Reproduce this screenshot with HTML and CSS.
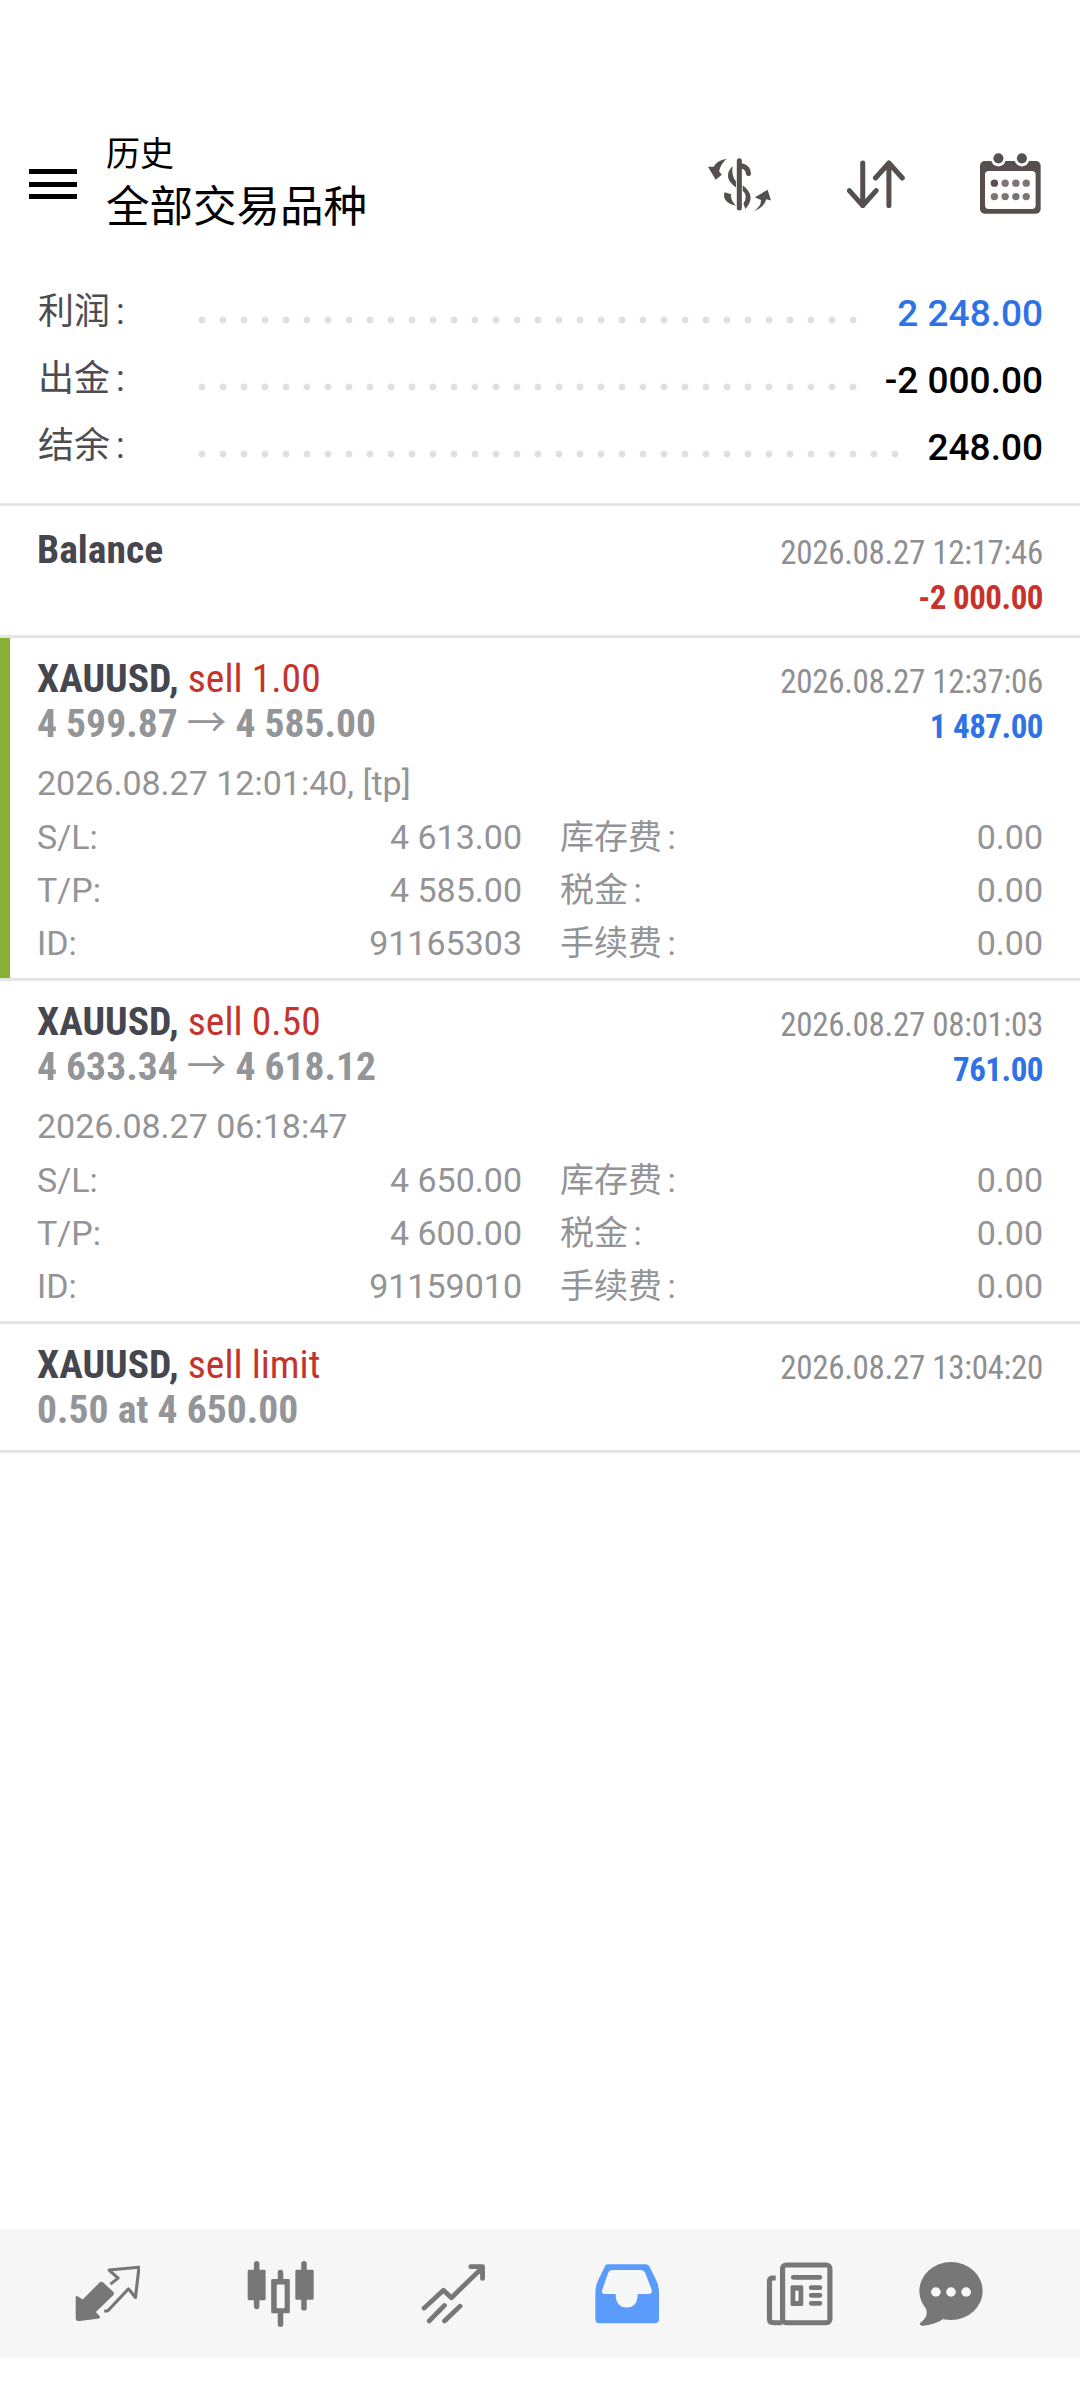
FILE: index.html
```html
<!DOCTYPE html>
<html lang="zh-CN">
<head>
    <meta charset="UTF-8">
    <title>历史</title>
    <link rel="stylesheet" href="styles.css">
</head>
<body>
    <header class="topbar">
        <div class="burger"><span></span><span></span><span></span></div>
        <div class="titles">
            <div class="title-small">历史</div>
            <div class="title-big">全部交易品种</div>
        </div>
        <div class="top-icons">
            <svg class="ic-money" viewBox="85 82 187 158" preserveAspectRatio="none">
                <path d="M178 90V231" fill="none" stroke="#55504d" stroke-width="15" stroke-linecap="round"/>
                <path d="M205 128Q203 110 186 106" fill="none" stroke="#55504d" stroke-width="15" stroke-linecap="round"/>
                <path d="M158 106Q126 140 168 170L168 152Q154 135 158 106Z" fill="#55504d"/>
                <path d="M188 163Q230 195 196 234L190 218Q206 195 188 180Z" fill="#55504d"/>
                <path d="M134 184Q126 215 168 224Q150 205 154 190Z" fill="#55504d"/>
                <path d="M140 84Q110 90 102 108L85 108L108 147L126 132L118 122Q120 104 140 84Z" fill="#55504d"/>
                <path d="M220 240Q244 226 242 207L224 199L262 177L272 209L258 205Q252 230 220 240Z" fill="#55504d"/>
            </svg>
            <svg class="ic-sort" viewBox="500 88 173 144" preserveAspectRatio="none">
                <path d="M547 97V225M507 180L547 225L587 180M625 225V97M585 142L625 97L665 142" fill="none" stroke="#55504d" stroke-width="15" stroke-linecap="round" stroke-linejoin="round"/>
            </svg>
            <svg class="ic-cal" viewBox="900 66 182 182" preserveAspectRatio="none">
                <rect x="900" y="90" width="181" height="157" rx="14" fill="#55504d"/>
                <rect x="915" y="120" width="151" height="113" rx="11" fill="#fff"/>
                <circle cx="955" cy="84" r="22" fill="#fff"/>
                <circle cx="1025" cy="84" r="22" fill="#fff"/>
                <circle cx="955" cy="82" r="15" fill="#55504d"/>
                <circle cx="1025" cy="82" r="15" fill="#55504d"/>
                <circle cx="943" cy="156" r="11" fill="#55504d"/>
                <circle cx="975" cy="156" r="11" fill="#7b7673"/>
                <circle cx="1007" cy="156" r="11" fill="#7b7673"/>
                <circle cx="1038" cy="156" r="11" fill="#7b7673"/>
                <circle cx="943" cy="196" r="11" fill="#7b7673"/>
                <circle cx="975" cy="196" r="11" fill="#7b7673"/>
                <circle cx="1007" cy="196" r="11" fill="#7b7673"/>
                <circle cx="1038" cy="196" r="11" fill="#7b7673"/>
            </svg>
        </div>
    </header>

    <section class="summary">
        <div class="sum-row">
            <span class="sum-label">利润 :</span>
            <span class="dots dots-32"></span>
            <span class="sum-value blue">2 248.00</span>
        </div>
        <div class="sum-row">
            <span class="sum-label">出金 :</span>
            <span class="dots dots-32"></span>
            <span class="sum-value">-2 000.00</span>
        </div>
        <div class="sum-row">
            <span class="sum-label">结余 :</span>
            <span class="dots dots-34"></span>
            <span class="sum-value">248.00</span>
        </div>
    </section>

    <section class="item item-balance">
        <div class="item-head">
            <div class="names">
                <div class="name"><b>Balance</b></div>
            </div>
            <div class="times">
                <div class="time">2026.08.27 12:17:46</div>
                <div class="amount red">-2 000.00</div>
            </div>
        </div>
    </section>

    <section class="item item-closed">
        <div class="item-head">
            <div class="names">
                <div class="name"><b>XAUUSD,</b> <em>sell 1.00</em></div>
                <div class="price">4 599.87 <i>→</i> 4 585.00</div>
            </div>
            <div class="times">
                <div class="time">2026.08.27 12:37:06</div>
                <div class="amount blue">1 487.00</div>
            </div>
        </div>
        <div class="opened">2026.08.27 12:01:40, [tp]</div>
        <div class="details">
            <span>S/L:</span><span class="num">4 613.00</span><span class="zh">库存费 :</span><span class="num">0.00</span>
            <span>T/P:</span><span class="num">4 585.00</span><span class="zh">税金 :</span><span class="num">0.00</span>
            <span>ID:</span><span class="num">91165303</span><span class="zh">手续费 :</span><span class="num">0.00</span>
        </div>
    </section>

    <section class="item">
        <div class="item-head">
            <div class="names">
                <div class="name"><b>XAUUSD,</b> <em>sell 0.50</em></div>
                <div class="price">4 633.34 <i>→</i> 4 618.12</div>
            </div>
            <div class="times">
                <div class="time">2026.08.27 08:01:03</div>
                <div class="amount blue">761.00</div>
            </div>
        </div>
        <div class="opened">2026.08.27 06:18:47</div>
        <div class="details">
            <span>S/L:</span><span class="num">4 650.00</span><span class="zh">库存费 :</span><span class="num">0.00</span>
            <span>T/P:</span><span class="num">4 600.00</span><span class="zh">税金 :</span><span class="num">0.00</span>
            <span>ID:</span><span class="num">91159010</span><span class="zh">手续费 :</span><span class="num">0.00</span>
        </div>
    </section>

    <section class="item item-pending">
        <div class="item-head">
            <div class="names">
                <div class="name"><b>XAUUSD,</b> <em>sell limit</em></div>
                <div class="price">0.50 at 4 650.00</div>
            </div>
            <div class="times">
                <div class="time">2026.08.27 13:04:20</div>
            </div>
        </div>
    </section>

    <div class="blank"></div>

    <nav class="bottom-nav">
        <div class="nav-slot">
            <svg class="nav-trade" viewBox="218 165 187 170" preserveAspectRatio="none">
                <path d="M220 262Q220 254 228 260L240 268L288 218Q294 212 300 218L328 245Q332 250 328 255L278 305L288 316Q294 324 284 325L230 332Q220 333 220 322Z" fill="#777"/>
                <path d="M302 302H312L372 236L392 262L402 172L316 180L342 204L320 222" fill="none" stroke="#777" stroke-width="9" stroke-linejoin="round"/>
            </svg>
        </div>
        <div class="nav-slot">
            <svg class="nav-chart" viewBox="716 150 194 197" preserveAspectRatio="none">
                <path d="M744 158V286M813 184V339M881 158V290" fill="none" stroke="#777" stroke-width="16" stroke-linecap="round"/>
                <rect x="718" y="176" width="52" height="91" rx="4" fill="#777"/>
                <rect x="856" y="176" width="53" height="90" rx="4" fill="#777"/>
                <rect x="786" y="204" width="54" height="102" rx="4" fill="#777"/>
                <rect x="802" y="220" width="23" height="71" rx="3" fill="#f6f6f6"/>
            </svg>
        </div>
        <div class="nav-slot">
            <svg class="nav-signal" viewBox="1222 157 188 178" preserveAspectRatio="none">
                <path d="M1231 288L1287 235L1310 257L1392 175M1366 165H1400V200M1246 326L1290 280M1290 326L1335 282" fill="none" stroke="#777" stroke-width="14" stroke-linecap="round" stroke-linejoin="round"/>
            </svg>
        </div>
        <div class="nav-slot">
            <svg class="nav-history" viewBox="160 157 186 178" preserveAspectRatio="none">
                <path d="M198 158H306Q316 158 320 168L338 205Q346 222 346 245V320Q346 333 333 333H173Q161 333 161 320V245Q161 222 169 205L187 168Q190 158 198 158Z" fill="#5a9bfb"/>
                <path d="M212 175H292Q302 175 306 184L325 234Q327 246 316 246H284Q284 286 252 286Q220 286 220 246H190Q178 246 181 234L198 184Q202 175 212 175Z" fill="#f6f7f7"/>
            </svg>
        </div>
        <div class="nav-slot">
            <svg class="nav-news" viewBox="662 150 194 192" preserveAspectRatio="none">
                <rect x="710" y="159" width="137" height="173" rx="10" fill="none" stroke="#777" stroke-width="15"/>
                <path d="M690 198H682Q672 198 672 208V320Q672 332 684 332H708" fill="none" stroke="#777" stroke-width="15"/>
                <path d="M741 196H818M793 227H818M793 250H818M793 274H818" fill="none" stroke="#777" stroke-width="14" stroke-linecap="round"/>
                <rect x="733" y="220" width="37" height="62" rx="5" fill="#777"/>
                <rect x="747" y="236" width="9" height="31" fill="#fff"/>
            </svg>
        </div>
        <div class="nav-slot nav-slot-last">
            <svg class="nav-chat" viewBox="1100 150 186 192" preserveAspectRatio="none">
                <ellipse cx="1193" cy="237" rx="92" ry="87" fill="#777"/>
                <path d="M1118 285Q1132 312 1102 334Q1102 342 1112 341Q1142 340 1170 322Z" fill="#777"/>
                <circle cx="1149" cy="240" r="14" fill="#f6f7f7"/>
                <circle cx="1193" cy="240" r="14" fill="#f6f7f7"/>
                <circle cx="1237" cy="240" r="14" fill="#f6f7f7"/>
            </svg>
        </div>
    </nav>
</body>
</html>
```

FILE: styles.css
```css
* {
    box-sizing: border-box;
}
body {
    margin: 0;
    width: 1080px;
    height: 2400px;
    background: #fff;
    font-family: Roboto, "Noto Sans CJK SC", sans-serif;
    color: #000;
    overflow: hidden;
}

/* top bar */
.topbar {
    display: flex;
    align-items: center;
    height: 235px;
    padding: 133px 0 0 29px;
}
.burger {
    width: 48px;
    margin-right: 29px;
}
.burger span {
    display: block;
    height: 5px;
    margin: 7.5px 0;
    background: #000;
}
.titles {
    flex: 1;
    padding-top: 2px;
}
.title-small {
    font-size: 34px;
    line-height: 40px;
}
.title-big {
    font-size: 43.5px;
    line-height: 56px;
    margin-top: 6px;
}
.top-icons {
    display: flex;
    align-items: center;
    width: 372px;
    height: 64px;
}
.ic-money {
    width: 63px;
    height: 53px;
    margin-right: 76px;
}
.ic-sort {
    width: 58px;
    height: 48px;
    margin-right: 75px;
}
.ic-cal {
    width: 61px;
    height: 61px;
    margin-top: -2px;
}

/* summary */
.summary {
    padding: 44px 37px 23px 38px;
    border-bottom: 3px solid #e4e4e4;
    height: 271px;
}
.sum-row {
    display: flex;
    height: 67px;
    line-height: 67px;
}
.sum-label {
    width: 160px;
    font-size: 36px;
    color: #4c4c52;
    word-spacing: -3px;
}
.dots {
    height: 67px;
    background-image: radial-gradient(circle 3.7px at 4px 41px, #e0e0e0 90%, transparent 100%);
    background-size: 21px 67px;
    background-repeat: repeat-x;
}
.dots-32 {
    width: 672px;
}
.dots-34 {
    width: 714px;
}
.sum-value {
    margin-left: auto;
    padding-top: 1px;
    font-size: 37px;
    font-weight: 500;
}
.blue {
    color: #2f72e6;
}
.red {
    color: #c5332c;
}

/* deals */
.item {
    padding: 19px 37px 9px 37px;
    border-bottom: 3px solid #e4e4e4;
}
.item-balance {
    height: 132px;
    padding-top: 22px;
}
.item-closed {
    box-shadow: inset 10px 0 0 #86b037;
}
.item-pending {
    padding-bottom: 17px;
}
.item-head {
    display: flex;
    justify-content: space-between;
    font-stretch: condensed;
}
.name {
    font-size: 39.6px;
    line-height: 44px;
    color: #46464e;
}
.name b {
    font-weight: 700;
}
.name em {
    font-style: normal;
    color: #c5332c;
}
.price {
    font-size: 39.6px;
    line-height: 46px;
    font-weight: 700;
    color: #939598;
}
.price i {
    font-style: normal;
    font-weight: 400;
}
.times {
    text-align: right;
    margin-top: 2px;
}
.time {
    font-size: 33px;
    line-height: 45px;
    letter-spacing: -0.3px;
    color: #8f8f92;
}
.amount {
    font-size: 33px;
    line-height: 45px;
    letter-spacing: -0.5px;
    font-weight: 700;
}
.opened {
    margin-top: 8px;
    font-size: 34px;
    line-height: 53px;
    color: #949497;
}
.details {
    display: grid;
    grid-template-columns: 130px 355px 259px 262px;
    margin-top: 1px;
    margin-bottom: -1px;
    font-size: 34px;
    line-height: 53px;
    color: #949497;
}
.details .num {
    text-align: right;
}
.details .zh {
    padding-left: 38px;
    word-spacing: -3px;
}

.blank {
    height: 776px;
}

/* bottom nav */
.bottom-nav {
    display: flex;
    align-items: center;
    height: 129px;
    padding-left: 21px;
    background: #f6f6f6;
}
.nav-slot {
    display: flex;
    justify-content: center;
    align-items: center;
    width: 173px;
    height: 129px;
}
.nav-slot-last {
    width: 129px;
}
.nav-trade {
    width: 65px;
    height: 57px;
}
.nav-chart {
    width: 67px;
    height: 66px;
}
.nav-signal {
    width: 65px;
    height: 60px;
}
.nav-history {
    width: 64px;
    height: 60px;
}
.nav-news {
    width: 67px;
    height: 64px;
}
.nav-chat {
    width: 64px;
    height: 64px;
}
```
